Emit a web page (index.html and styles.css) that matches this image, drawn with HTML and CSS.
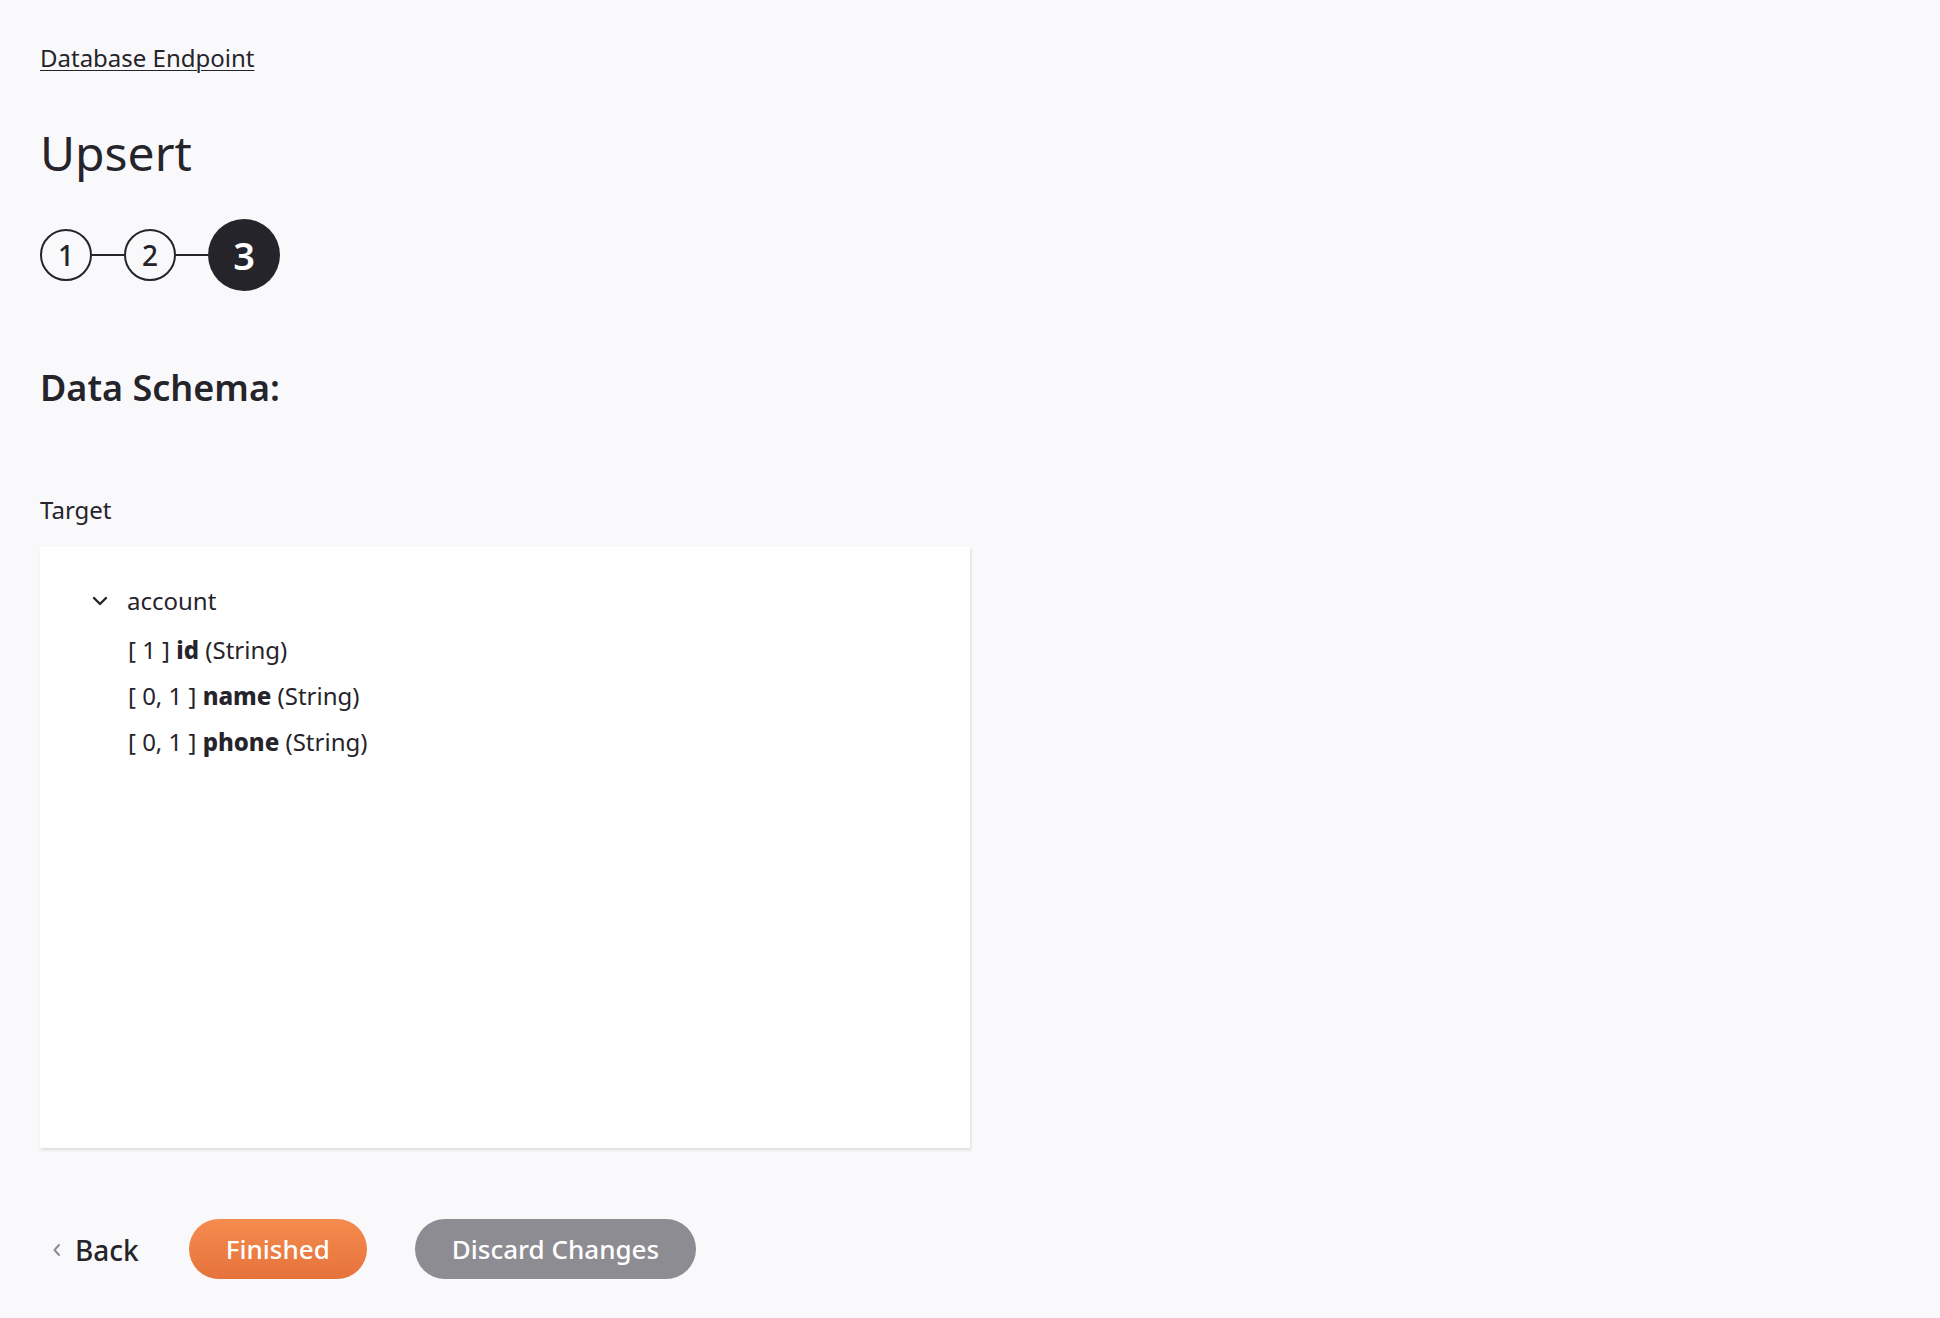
FILE: index.html
```html
<!DOCTYPE html>
<html lang="en">
<head>
    <meta charset="UTF-8">
    <meta name="viewport" content="width=device-width, initial-scale=1.0">
    <title>Upsert - Database Endpoint</title>
    <link rel="stylesheet" href="styles.css">
</head>
<body>
    <div class="page">
        <a class="breadcrumb" href="#">Database Endpoint</a>
        <h1 class="title">Upsert</h1>

        <div class="steps">
            <div class="step">1</div>
            <div class="step-line"></div>
            <div class="step">2</div>
            <div class="step-line"></div>
            <div class="step current">3</div>
        </div>

        <h2 class="section-title">Data Schema:</h2>

        <div class="field-label">Target</div>
        <div class="schema-panel">
            <div class="tree-node">
                <svg class="chevron" width="16" height="10" viewBox="0 0 16 10">
                    <path d="M2 2 L8 8 L14 2" fill="none" stroke="#26242b" stroke-width="2.4" stroke-linecap="round" stroke-linejoin="round"/>
                </svg>
                <span>account</span>
            </div>
            <div class="tree-children">
                <div class="tree-leaf">[ 1 ] <b>id</b> (String)</div>
                <div class="tree-leaf">[ 0, 1 ] <b>name</b> (String)</div>
                <div class="tree-leaf">[ 0, 1 ] <b>phone</b> (String)</div>
            </div>
        </div>

        <div class="actions">
            <button class="back-btn">
                <svg width="9" height="14" viewBox="0 0 9 14">
                    <path d="M7 2 L2.5 7 L7 12" fill="none" stroke="#8e8c93" stroke-width="2" stroke-linecap="round" stroke-linejoin="round"/>
                </svg>
                Back
            </button>
            <button class="pill finished">Finished</button>
            <button class="pill discard">Discard Changes</button>
        </div>
    </div>
</body>
</html>
```

FILE: styles.css
```css
:root {
    --bg-color: #f9f9fb;
    --text-color: #26242b;
    --muted: #8e8c93;
    --panel-bg: #ffffff;
}

body {
    margin: 0;
    background-color: var(--bg-color);
    color: var(--text-color);
    font-family: "Noto Sans", "Open Sans", sans-serif;
    font-size: 24px;
    line-height: 32px;
}

.page {
    padding: 42px 40px 40px;
}

.breadcrumb {
    display: inline-block;
    color: var(--text-color);
    text-decoration: underline;
    text-underline-offset: 3px;
    text-decoration-thickness: 1px;
}

.title {
    margin: 47px 0 0;
    font-size: 48px;
    line-height: 64px;
    font-weight: 400;
}

.steps {
    display: flex;
    align-items: center;
    margin-top: 34px;
    height: 72px;
}

.step {
    width: 52px;
    height: 52px;
    box-sizing: border-box;
    border: 2px solid var(--text-color);
    border-radius: 50%;
    display: flex;
    align-items: center;
    justify-content: center;
    font-size: 28px;
    font-weight: 500;
}

.step.current {
    width: 72px;
    height: 72px;
    border: none;
    background-color: var(--text-color);
    color: white;
    font-size: 38px;
    font-weight: 600;
}

.step-line {
    width: 32px;
    height: 2px;
    background-color: var(--text-color);
}

.section-title {
    margin: 73px 0 0;
    font-size: 36px;
    line-height: 48px;
    font-weight: 600;
}

.field-label {
    margin-top: 82px;
}

.schema-panel {
    margin-top: 21px;
    width: 930px;
    height: 601px;
    box-sizing: border-box;
    padding: 38px 0 0 52px;
    background-color: var(--panel-bg);
    box-shadow: 1px 2px 3px rgba(0, 0, 0, 0.12);
}

.tree-node {
    display: flex;
    align-items: center;
    gap: 19px;
}

.chevron {
    display: block;
}

.tree-children {
    margin-top: 17px;
    padding-left: 36px;
    display: flex;
    flex-direction: column;
    gap: 14px;
}

.tree-leaf b {
    font-weight: 800;
}

.actions {
    display: flex;
    align-items: center;
    margin-top: 70px;
}

button {
    font-family: inherit;
    border: none;
    cursor: pointer;
}

.back-btn {
    display: flex;
    align-items: center;
    gap: 14px;
    padding: 2px 0 0 12px;
    background: none;
    color: var(--text-color);
    font-size: 28px;
    font-weight: 500;
    line-height: 60px;
}

.pill {
    height: 60px;
    padding: 0 37px;
    border-radius: 30px;
    color: white;
    font-size: 26px;
    font-weight: 500;
}

.finished {
    margin-left: 50px;
    background: linear-gradient(#f58b4f, #e5733b);
}

.discard {
    margin-left: 48px;
    background-color: var(--muted);
}
```
